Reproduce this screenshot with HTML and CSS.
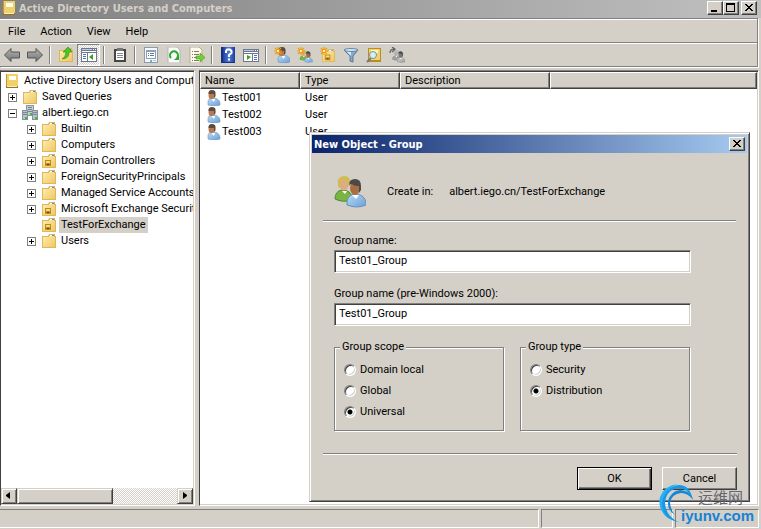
FILE: index.html
```html
<!DOCTYPE html>
<html lang="en">
<head>
  <meta charset="utf-8">
  <title>Active Directory Users and Computers</title>
  <link rel="stylesheet" href="styles.css">
</head>
<body>
  <svg class="sprites" aria-hidden="true">
    <defs>
      <linearGradient id="gold" x1="0" y1="0" x2="1" y2="1">
        <stop offset="0" stop-color="#feeeb4"/><stop offset="1" stop-color="#efc763"/>
      </linearGradient>
      <linearGradient id="steel" x1="0" y1="0" x2="0" y2="1">
        <stop offset="0" stop-color="#b4b4b4"/><stop offset="1" stop-color="#737373"/>
      </linearGradient>
      <linearGradient id="shirt" x1="0" y1="0" x2="1" y2="1">
        <stop offset="0" stop-color="#b9dcf8"/><stop offset="1" stop-color="#6b9fd6"/>
      </linearGradient>
      <linearGradient id="blue" x1="0" y1="0" x2="1" y2="0">
        <stop offset="0" stop-color="#1f3f9e"/><stop offset=".5" stop-color="#4e7fe0"/><stop offset="1" stop-color="#1c3b98"/>
      </linearGradient>
    </defs>
    <symbol id="book" viewBox="0 0 16 16">
      <path d="M2 1h12v12l-1 2H2z" fill="#c99b2c"/>
      <path d="M3 1h11v12H3z" fill="#efd06a"/>
      <path d="M2 1h1v12H2z" fill="#c59a2c"/>
      <path d="M5 3h7v4H5z" fill="#fffdf0"/>
      <path d="M2 13h12v2H2z" fill="#9a741c"/>
      <path d="M3 13h10v1H3z" fill="#f6eecb"/>
    </symbol>
    <symbol id="folder" viewBox="0 0 16 16">
      <path d="M1 3h6l1-2h6v2h1v12H1z" fill="#dfb65a"/>
      <path d="M2 4h6l1-2h4v2h1v10H2z" fill="url(#gold)"/>
      <path d="M9 2h4v1H9z" fill="#fff"/>
      <path d="M11 2h2v1h-2z" fill="#3d8fe0"/>
    </symbol>
    <symbol id="ou" viewBox="0 0 16 16">
      <use href="#folder"/>
      <path d="M4 7h6v6H4z" fill="#b98c1f"/>
      <path d="M5 8h4v2H5z" fill="#f5dc80"/>
      <path d="M6 11h2v1H6z" fill="#5d430a"/>
    </symbol>
    <symbol id="domain" viewBox="0 0 16 16">
      <path d="M4 0h8v11H4z" fill="#8e979e"/>
      <path d="M5 1h6v9H5z" fill="#c3cbd1"/>
      <path d="M6 2h4v1H6zM6 4h4v1H6zM6 6h4v1H6z" fill="#75848f"/>
      <path d="M0 5h6v10H0zM10 5h6v10h-6z" fill="#87919a"/>
      <path d="M1 6h4v8H1zM11 6h4v8h-4z" fill="#b9c3ca"/>
      <path d="M1 7h4v1H1zM1 9h4v1H1zM11 7h4v1h-4zM11 9h4v1h-4z" fill="#798893"/>
      <path d="M3 12h2v2H3zM13 12h2v2h-2zM8 8h2v2H8z" fill="#35c02c"/>
    </symbol>
    <symbol id="user" viewBox="0 0 16 16">
      <path d="M3 15V12q0-4 5-4 6 0 7 5v2q-6 2-12 0z" fill="url(#shirt)" stroke="#6c94bd" stroke-width=".6"/>
      <path d="M6 9l3 3 1-3z" fill="#fff"/>
      <ellipse cx="6.500" cy="5" rx="3" ry="4.300" fill="#b77b50"/>
      <path d="M3.500 4Q3 0 7 0t3.500 4v2q-1 3-1.500 1V4Q6 4 3.500 4z" fill="#5d4b40"/>
    </symbol>
    <symbol id="spark" viewBox="0 0 16 16">
      <path d="M4 0v8M0 4h8M1 1l6 6M7 1L1 7" stroke="#f39a14" stroke-width="1.200"/>
      <path d="M3 3h2v2H3z" fill="#fff1a0"/>
    </symbol>
    <symbol id="group" viewBox="0 0 32 32">
      <path d="M1 23Q1 15 8 14q9 0 10 8v2Q9 27 1 23z" fill="#79b445" stroke="#4f8c2c"/>
      <path d="M8 15l3 3 2-3z" fill="#fff"/>
      <ellipse cx="10" cy="8" rx="5" ry="6.500" fill="#dfab80"/>
      <path d="M4 9Q2 1 10 0q7 0 6 7-5 0-7-3-3 0-3 5v3q-2 0-2-3z" fill="#d0bb55"/>
      <path d="M13 29q-1-9 7-11 11 0 12 9v2q-9 4-19 0z" fill="url(#shirt)" stroke="#6790bc"/>
      <path d="M18 19l4 4 3-4z" fill="#fff"/>
      <ellipse cx="21" cy="12" rx="5" ry="7" fill="#a96f43"/>
      <path d="M15 9q0-6 6-6t6 7v4l-2 3v-7q-5 0-7-2-3 0-3 2z" fill="#4c4948"/>
    </symbol>
  </svg>

  <header class="titlebar">
    <svg class="icon"><use href="#book"/></svg>
    <h1>Active Directory Users and Computers</h1>
    <div class="window-buttons">
      <button class="caption" aria-label="Minimize"><svg viewBox="0 0 12 10"><path d="M2 7h6v2H2z"/></svg></button>
      <button class="caption" aria-label="Maximize"><svg viewBox="0 0 12 10"><path d="M1 0h9v9H1zM2 2v6h7V2z" fill-rule="evenodd"/></svg></button>
      <button class="caption close" aria-label="Close"><svg viewBox="0 0 12 10"><path d="M2 1h2v1h1v1h2V2h1V1h2v1H9v1H8v1H7v1h1v1h1v1h1v1H8V7H7V6H5v1H4v1H2V7h1V6h1V5h1V4H4V3H3V2H2z"/></svg></button>
    </div>
  </header>

  <div class="bars">
    <nav class="menubar">
      <button>File</button>
      <button>Action</button>
      <button>View</button>
      <button>Help</button>
    </nav>
    <div class="toolbar">
      <button aria-label="Back"><svg class="icon" viewBox="0 0 16 16"><path d="M.5 8L7 1.500V5h8.500v6H7v3.500z" fill="url(#steel)" stroke="#555"/></svg></button>
      <button aria-label="Forward"><svg class="icon" viewBox="0 0 16 16"><path d="M15.500 8L9 1.500V5H.5v6H9v3.500z" fill="url(#steel)" stroke="#555"/></svg></button>
      <span class="divider"></span>
      <button aria-label="Up one level"><svg class="icon" viewBox="0 0 16 16"><use href="#folder"/><path d="M4 12q4-2 4-7H5l5-5 4 5h-3q0 7-7 7z" fill="#4cc526" stroke="#2b8d12" stroke-width=".6"/></svg></button>
      <button class="pressed" aria-label="Show console tree"><svg class="icon" viewBox="0 0 16 16"><path d="M0 1h16v14H0z" fill="#6b7890"/><path d="M1 4h14v1H1zM1 6h5v8H1zM7 6h8v8H7z" fill="#fff"/><path d="M1 2h10v1H1z" fill="#b9c9e4"/><path d="M12 2h1v1h-1zM14 2h1v1h-1z" fill="#fff"/><path d="M2 7h3v1H2zM2 9h3v1H2zM2 11h3v1H2z" fill="#4f78bc"/><path d="M12 7v6l-4-3z" fill="#35a51f"/></svg></button>
      <span class="divider"></span>
      <button aria-label="Paste"><svg class="icon" viewBox="0 0 16 16"><path d="M2 2h12v13H2z" fill="#454545"/><path d="M4 4h8v9H4z" fill="#fff"/><path d="M5 1h6v3H5z" fill="#777"/><path d="M5 6h6v1H5zM5 8h6v1H5zM5 10h6v1H5z" fill="#888"/></svg></button>
      <span class="divider"></span>
      <button aria-label="Properties"><svg class="icon" viewBox="0 0 16 16"><path d="M1 0h14v16H1z" fill="#909baa"/><path d="M2 1h12v14H2z" fill="#f5f7fa"/><path d="M3 3h10v9H3z" fill="#8e9fb5"/><path d="M4 5h8v6H4z" fill="#fff"/><path d="M5 6h1v1H5zM7 6h4v1H7zM5 8h1v1H5zM7 8h4v1H7z" fill="#5f7797"/><path d="M7 13h2v2H7z" fill="#55b8dc"/><path d="M10 13h3v1h-3z" fill="#9ccfe4"/></svg></button>
      <button aria-label="Refresh"><svg class="icon" viewBox="0 0 16 16"><path d="M2 0h9l3 3v13H2z" fill="#fbfbfb" stroke="#b5b5b5"/><path d="M5 11a4 4 0 1 1 6 0" fill="none" stroke="#2fa92b" stroke-width="2"/><path d="M13 8v5H8z" fill="#2fa92b"/></svg></button>
      <button aria-label="Export list"><svg class="icon" viewBox="0 0 16 16"><path d="M1 0h9l3 3v13H1z" fill="#fffbe8" stroke="#b5ad91"/><path d="M3 4h1v1H3zM5 4h5v1H5zM3 7h1v1H3zM5 7h5v1H5zM3 10h1v1H3zM5 10h3v1H5zM3 13h1v1H3zM5 13h5v1H5z" fill="#777"/><path d="M7 9h4V6l5 4.500-5 4.500v-3H7z" fill="#74cf37" stroke="#429c1e" stroke-width=".6"/></svg></button>
      <span class="divider"></span>
      <button aria-label="Help"><svg class="icon" viewBox="0 0 16 16"><path d="M1 0h14v16H1z" fill="#17307f"/><path d="M3 0h12v15H3z" fill="url(#blue)"/><path d="M6 6V4l1-1.500h3L11.500 4v2L9 8v2" fill="none" stroke="#fff" stroke-width="2"/><path d="M8 11.500h2v2H8z" fill="#fff"/></svg></button>
      <button aria-label="Show action pane"><svg class="icon" viewBox="0 0 16 16"><path d="M0 2h16v13H0z" fill="#6b7890"/><path d="M1 5h14v1H1zM1 7h8v7H1zM10 7h5v7h-5z" fill="#fff"/><path d="M1 3h10v1H1z" fill="#b9c9e4"/><path d="M12 3h1v1h-1zM14 3h1v1h-1z" fill="#fff"/><path d="M11 8h3v1h-3zM11 10h3v1h-3zM11 12h3v1h-3z" fill="#4f78bc"/><path d="M4 8v5l4-3z" fill="#35a51f"/></svg></button>
      <span class="divider"></span>
      <button aria-label="New user"><svg class="icon" viewBox="0 0 16 16"><use href="#user" x="1"/><use href="#spark"/></svg></button>
      <button aria-label="New group"><svg class="icon" viewBox="0 0 16 16"><use href="#group" x="2" y="3" width="14" height="13"/><use href="#spark"/></svg></button>
      <button aria-label="New organizational unit"><svg class="icon" viewBox="0 0 16 16"><use href="#ou" x="1" y="1" width="15" height="15"/><use href="#spark"/></svg></button>
      <button aria-label="Filter"><svg class="icon" viewBox="0 0 16 16"><path d="M1 3l6 6v5l3 1V9l5-6z" fill="#86a9c9" stroke="#48698a" stroke-width=".8"/><path d="M3 4l5 5V4z" fill="#d8eaf8"/><ellipse cx="8" cy="3" rx="7" ry="1.500" fill="#cfe2f1" stroke="#557694" stroke-width=".8"/></svg></button>
      <button aria-label="Find"><svg class="icon" viewBox="0 0 16 16"><path d="M2 1h13v14H2z" fill="#b78e20"/><path d="M3 2h11v11H3z" fill="#f1d36a"/><path d="M5 3h7v3H5z" fill="#fff6ca"/><path d="M1 15l4-4" stroke="#777" stroke-width="2"/><circle cx="7" cy="8" r="3.500" fill="#d8edf5" stroke="#7790a0"/></svg></button>
      <button aria-label="Add to group"><svg class="icon" viewBox="0 0 16 16"><g class="mono"><use href="#group" x="3" y="3" width="13" height="13"/></g><path d="M1 6q0-4 4-4M3 0l3 2-3 3" fill="none" stroke="#5d5d5d" stroke-width="1.200"/></svg></button>
    </div>
  </div>

  <main class="panes">
    <nav class="tree-pane">
      <ul class="tree">
        <li class="root"><svg class="icon"><use href="#book"/></svg><span>Active Directory Users and Comput</span></li>
        <li><button class="toggle" aria-label="Expand"></button><svg class="icon"><use href="#folder"/></svg><span>Saved Queries</span></li>
        <li><button class="toggle open" aria-label="Collapse"></button><svg class="icon"><use href="#domain"/></svg><span>albert.iego.cn</span>
          <ul>
            <li><button class="toggle" aria-label="Expand"></button><svg class="icon"><use href="#folder"/></svg><span>Builtin</span></li>
            <li><button class="toggle" aria-label="Expand"></button><svg class="icon"><use href="#folder"/></svg><span>Computers</span></li>
            <li><button class="toggle" aria-label="Expand"></button><svg class="icon"><use href="#ou"/></svg><span>Domain Controllers</span></li>
            <li><button class="toggle" aria-label="Expand"></button><svg class="icon"><use href="#folder"/></svg><span>ForeignSecurityPrincipals</span></li>
            <li><button class="toggle" aria-label="Expand"></button><svg class="icon"><use href="#folder"/></svg><span>Managed Service Accounts</span></li>
            <li><button class="toggle" aria-label="Expand"></button><svg class="icon"><use href="#ou"/></svg><span>Microsoft Exchange Securit</span></li>
            <li class="leaf"><svg class="icon"><use href="#ou"/></svg><span class="selected">TestForExchange</span></li>
            <li><button class="toggle" aria-label="Expand"></button><svg class="icon"><use href="#folder"/></svg><span>Users</span></li>
          </ul>
        </li>
      </ul>
      <div class="scrollbar">
        <button class="raised" aria-label="Scroll left"><svg viewBox="0 0 12 12"><path d="M7 2v7L3 6V5z"/></svg></button>
        <div class="thumb raised"></div>
        <button class="raised end" aria-label="Scroll right"><svg viewBox="0 0 12 12"><path d="M4 2v7l4-3V5z"/></svg></button>
      </div>
    </nav>

    <section class="list-pane">
      <table class="objects">
        <thead>
          <tr><th class="col-name">Name</th><th class="col-type">Type</th><th class="col-desc">Description</th><th></th></tr>
        </thead>
        <tbody>
          <tr><td><svg class="icon"><use href="#user"/></svg>Test001</td><td>User</td><td></td><td></td></tr>
          <tr><td><svg class="icon"><use href="#user"/></svg>Test002</td><td>User</td><td></td><td></td></tr>
          <tr><td><svg class="icon"><use href="#user"/></svg>Test003</td><td>User</td><td></td><td></td></tr>
        </tbody>
      </table>
    </section>
  </main>

  <footer class="statusbar">
    <span class="status-main"></span>
    <span class="status-mid"></span>
    <span class="status-end"></span>
  </footer>

  <form class="dialog" role="dialog" aria-labelledby="dialog-title">
    <div class="dialog-title">
      <h2 id="dialog-title">New Object - Group</h2>
      <button type="button" class="caption" aria-label="Close"><svg viewBox="0 0 12 10"><path d="M2 1h2v1h1v1h2V2h1V1h2v1H9v1H8v1H7v1h1v1h1v1h1v1H8V7H7V6H5v1H4v1H2V7h1V6h1V5h1V4H4V3H3V2H2z"/></svg></button>
    </div>
    <div class="dialog-head">
      <svg class="big-icon"><use href="#group"/></svg>
      <span>Create in:</span>
      <span>albert.iego.cn/TestForExchange</span>
    </div>
    <div class="dialog-body">
      <label for="group-name">Group name:</label>
      <input type="text" id="group-name" value="Test01_Group">
      <label for="group-name-old">Group name (pre-Windows 2000):</label>
      <input type="text" id="group-name-old" value="Test01_Group">
      <div class="options">
        <fieldset>
          <legend>Group scope</legend>
          <label><input type="radio" name="scope">Domain local</label>
          <label><input type="radio" name="scope">Global</label>
          <label><input type="radio" name="scope" checked>Universal</label>
        </fieldset>
        <fieldset>
          <legend>Group type</legend>
          <label><input type="radio" name="type">Security</label>
          <label><input type="radio" name="type" checked>Distribution</label>
        </fieldset>
      </div>
    </div>
    <div class="dialog-actions">
      <button type="button" class="push default">OK</button>
      <button type="button" class="push">Cancel</button>
    </div>
  </form>

  <div class="watermark">
    <svg viewBox="0 0 40 40">
      <path d="M22 39Q4 36 4 20 6 4 22 2 33 2 36 17 31 5 21 5 9 7 8 20q1 14 14 19z" fill="#129bea"/>
      <path d="M18 32q-8-5-7-14 3-10 12-11 10 0 13 10-5-7-12-7-9 1-11 9 0 7 5 13z" fill="#1686d9"/>
      <path d="M3 14Q8 2 21 1 10 5 6 15 3 27 12 36 0 27 3 14z" fill="#2aaef5"/>
    </svg>
    <span class="mark-cn">运维网</span>
    <span class="mark-url">iyunv.com</span>
  </div>
</body>
</html>
```

FILE: styles.css
```css
* {
  box-sizing: border-box;
}

body {
  display: flex;
  flex-direction: column;
  height: 100vh;
  margin: 0;
  overflow: hidden;
  position: relative;
  background-color: #d4d0c8;
  color: #000;
  font: 11px/16px Tahoma, Roboto, sans-serif;
}

button, input {
  font: inherit;
  color: inherit;
}

button {
  background: none;
  border: none;
  padding: 0;
}

h1, h2 {
  margin: 0;
  font: bold 11px/16px Tahoma, "DejaVu Sans Condensed", sans-serif;
}

.sprites {
  width: 0;
  height: 0;
  flex: none;
}

.icon {
  width: 16px;
  height: 16px;
  flex: none;
}

.mono {
  filter: grayscale(1);
}

/* title bar */
.titlebar {
  display: flex;
  align-items: center;
  flex: none;
  height: 18px;
  padding: 0 4px 2px 1px;
  background: linear-gradient(to right, #808080, #c0c0c0);
  color: #d4d0c8;
}

.titlebar h1 {
  flex: 1;
  padding: 1px 0 0 2px;
}

.window-buttons {
  display: flex;
}

.caption {
  display: flex;
  width: 16px;
  height: 14px;
  padding: 1px;
  background-color: #d4d0c8;
  border: 1px solid;
  border-color: #fff #404040 #404040 #fff;
  box-shadow: inset -1px -1px #808080;
}

.caption svg {
  width: 12px;
  height: 10px;
}

.close {
  margin-left: 2px;
}

/* menu and toolbar */
.bars {
  flex: none;
  margin-right: 3px;
  border: 1px solid #808080;
  border-left: none;
  box-shadow: 1px 1px #fff;
}

.menubar {
  display: flex;
  gap: 15px;
  height: 24px;
  padding: 1px 0 0 8px;
  border-top: 1px solid #fff;
  border-bottom: 1px solid #808080;
}

.toolbar {
  display: flex;
  align-items: center;
  height: 23px;
  border-top: 1px solid #fff;
}

.toolbar button {
  display: flex;
  align-items: center;
  justify-content: center;
  width: 23px;
  height: 22px;
}

.toolbar .pressed {
  background: repeating-conic-gradient(#fff 0 25%, #d4d0c8 0 50%) 0 0 / 2px 2px;
  border: 1px solid;
  border-color: #808080 #fff #fff #808080;
}

.divider {
  width: 2px;
  height: 18px;
  margin: 0 3px;
  border-left: 1px solid #808080;
  border-right: 1px solid #fff;
}

/* panes */
.panes {
  display: flex;
  flex: 1;
  gap: 4px;
  min-height: 0;
  margin: 3px 2px 3px 0;
}

.tree-pane, .list-pane {
  min-width: 0;
  background-color: #fff;
  border: 1px solid;
  border-color: #808080 #fff #fff #404040;
  box-shadow: inset 0 1px #404040, inset -1px -1px #d4d0c8;
}

.tree-pane {
  display: flex;
  flex-direction: column;
  flex: 0 0 195px;
  padding: 1px 1px 1px 0;
}

.tree, .tree ul {
  margin: 0;
  padding: 0;
  list-style: none;
}

.tree {
  flex: 1;
  padding-top: 1px;
  overflow: hidden;
}

.tree li {
  display: flex;
  flex-wrap: wrap;
  align-items: center;
  padding-left: 7px;
  white-space: nowrap;
}

.tree li > span {
  flex: 1 0 0;
  min-width: 0;
  margin-left: 2px;
  padding-left: 2px;
  overflow: hidden;
}

.tree .root {
  padding-left: 3px;
}

.tree .leaf > .selected {
  flex: none;
  padding-right: 2px;
  background-color: #d4d0c8;
}

.tree ul {
  width: 100%;
  padding-left: 12px;
}

.tree .leaf {
  padding-left: 21px;
}

.toggle {
  width: 9px;
  height: 9px;
  margin-right: 5px;
  border: 1px solid #808080;
  background:
    linear-gradient(#000, #000) center / 5px 1px no-repeat,
    linear-gradient(#000, #000) center / 1px 5px no-repeat;
}

.toggle.open {
  background: linear-gradient(#000, #000) center / 5px 1px no-repeat;
}

.scrollbar {
  display: flex;
  height: 16px;
  background: repeating-conic-gradient(#fff 0 25%, #d4d0c8 0 50%) 0 0 / 2px 2px;
}

.raised {
  width: 16px;
  padding: 1px;
  background-color: #d4d0c8;
  border: 1px solid;
  border-color: #d4d0c8 #404040 #404040 #d4d0c8;
  box-shadow: inset 1px 1px #fff, inset -1px -1px #808080;
}

.raised svg {
  display: block;
  width: 12px;
  height: 12px;
}

.thumb {
  width: 50%;
}

.end {
  margin-left: auto;
}

.list-pane {
  flex: 1;
  padding: 1px 1px 1px 0;
}

.objects {
  width: 100%;
  table-layout: fixed;
  border-collapse: separate;
  border-spacing: 0;
}

.objects th {
  height: 17px;
  padding: 1px 4px 0;
  background-color: #d4d0c8;
  border: 1px solid;
  border-color: #fff #404040 #404040 #fff;
  box-shadow: inset -1px -1px #808080;
  font-weight: normal;
  line-height: 14px;
  text-align: left;
}

.objects td {
  height: 17px;
  padding: 1px 5px 0;
}

.objects td .icon {
  margin-right: 1px;
  vertical-align: top;
}

.col-name, .col-type {
  width: 100px;
}

.col-desc {
  width: 150px;
}

/* status bar */
.statusbar {
  display: flex;
  flex: none;
  gap: 2px;
  height: 19px;
  margin: 0 2px 1px 0;
}

.statusbar span {
  border: 1px solid;
  border-color: #808080 #fff #fff #808080;
}

.status-main {
  flex: 1;
}

.statusbar .status-main {
  border-left: none;
}

.status-mid {
  width: 132px;
}

.status-end {
  width: 84px;
}

/* dialog */
.dialog {
  position: absolute;
  top: 132px;
  right: 11px;
  width: 441px;
  padding: 2px;
  background-color: #d4d0c8;
  border: 1px solid;
  border-color: #d4d0c8 #404040 #404040 #d4d0c8;
  box-shadow: inset 1px 1px #fff, inset -1px -1px #808080;
}

.dialog-title {
  display: flex;
  align-items: center;
  height: 18px;
  padding: 0 2px;
  background: linear-gradient(to right, #0a246a, #a6caf0);
  color: #fff;
}

.dialog-title h2 {
  flex: 1;
  padding-top: 1px;
}

.dialog-head {
  display: flex;
  align-items: center;
  gap: 16px;
  height: 68px;
  margin: 0 11px;
  padding: 11px 11px 0;
  border-bottom: 1px solid #808080;
  box-shadow: 0 1px #fff;
}

.big-icon {
  width: 32px;
  height: 32px;
  margin-right: 5px;
}

.dialog-body {
  padding: 12px 56px 22px 22px;
}

.dialog-body > label {
  display: block;
  margin-bottom: 1px;
}

.dialog-body input[type="text"] {
  display: block;
  width: 100%;
  height: 23px;
  margin-bottom: 13px;
  padding: 0 4px 2px;
  background-color: #fff;
  border: 1px solid;
  border-color: #808080 #fff #fff #808080;
  box-shadow: inset 1px 1px #404040, inset -1px -1px #d4d0c8;
  outline: none;
}

.options {
  display: flex;
  gap: 16px;
  padding-right: 1px;
}

fieldset {
  flex: 1;
  min-width: 0;
  height: 92px;
  margin: 0;
  padding: 4px 9px;
  border: 1px solid #808080;
  box-shadow: 1px 1px #fff, inset 1px 1px #fff;
}

legend {
  margin-left: -4px;
  padding: 0 2px;
  background-color: #d4d0c8;
}

fieldset label {
  display: flex;
  align-items: center;
  gap: 4px;
  height: 21px;
}

input[type="radio"] {
  appearance: none;
  width: 12px;
  height: 12px;
  margin: 0;
  background-color: #fff;
  border: 1px solid;
  border-color: #808080 #fff #fff #808080;
  border-radius: 50%;
  box-shadow: inset 1px 1px #404040, inset -1px -1px #d4d0c8;
}

input[type="radio"]:checked {
  background: radial-gradient(circle, #000 2px, #fff 3px);
}

.dialog-actions {
  display: flex;
  justify-content: flex-end;
  gap: 10px;
  margin: 0 10px 0 11px;
  padding: 13px 0 9px;
  border-top: 1px solid #808080;
  box-shadow: inset 0 1px #fff;
}

.push {
  width: 75px;
  height: 23px;
  border: 1px solid;
  border-color: #fff #404040 #404040 #fff;
  box-shadow: inset -1px -1px #808080;
}

.push.default {
  border-color: #000;
  box-shadow: inset 1px 1px #fff, inset -1px -1px #404040, inset -2px -2px #808080;
}

/* site mark */
.watermark {
  position: absolute;
  right: 4px;
  bottom: 4px;
  display: grid;
  grid-template-columns: 24px auto;
  width: 100px;
}

.watermark svg {
  position: absolute;
  left: 0;
  bottom: 0;
  width: 40px;
  height: 44px;
}

.mark-cn {
  grid-column: 2;
  padding-left: 17px;
  color: #66666e;
  font: 15px/20px "Noto Sans CJK SC", sans-serif;
}

.mark-url {
  grid-column: 2;
  color: #1583d6;
  font: bold 15px/18px "Liberation Sans", sans-serif;
}
```
